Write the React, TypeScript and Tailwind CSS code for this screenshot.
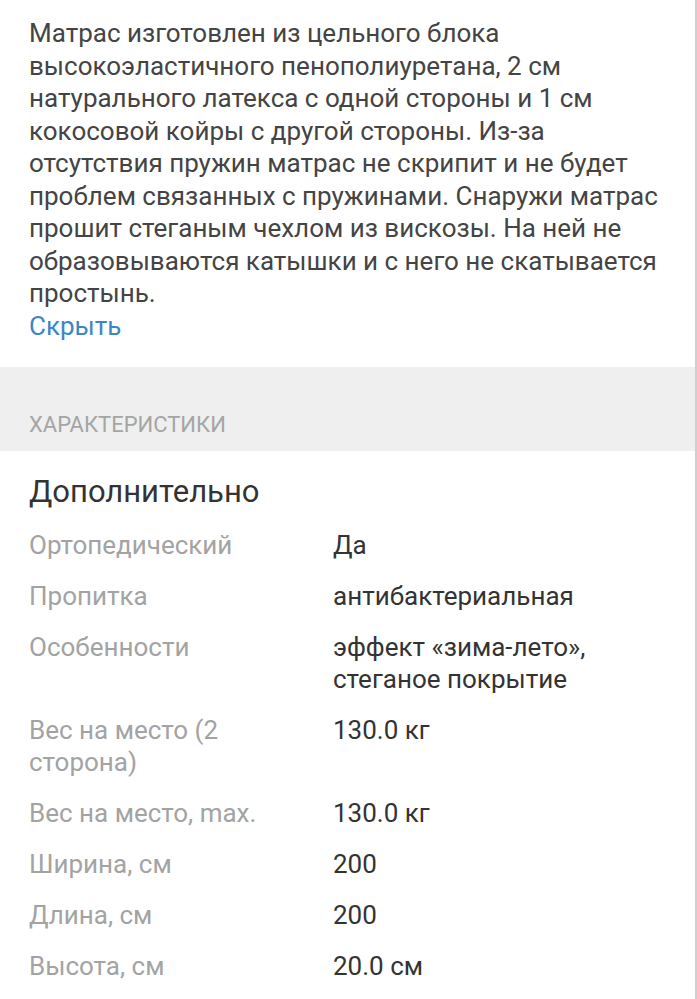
import React from "react";

const rows: { label: string; value: string[] }[] = [
  { label: "Ортопедический", value: ["Да"] },
  { label: "Пропитка", value: ["антибактериальная"] },
  { label: "Особенности", value: ["эффект «зима-лето»,", "стеганое покрытие"] },
  { label: "Вес на место (2 сторона)", value: ["130.0 кг"] },
  { label: "Вес на место, max.", value: ["130.0 кг"] },
  { label: "Ширина, см", value: ["200"] },
  { label: "Длина, см", value: ["200"] },
  { label: "Высота, см", value: ["20.0 см"] },
];

const SpecRow: React.FC<{ label: string; value: string[] }> = ({ label, value }) => (
  <div className="grid grid-cols-[304px_1fr] text-[26px] leading-[32px]">
    <div className="pr-[24px] text-[#a3a3a3]">{label}</div>
    <div className="text-[#333333]">
      {value.map((v) => (
        <div key={v}>{v}</div>
      ))}
    </div>
  </div>
);

export default function App() {
  return (
    <div className="min-h-screen w-full bg-white border-r-2 border-[#cfcfcf] font-['Roboto',sans-serif]">
      <section className="px-[29px] pt-[17px] pb-[25px]">
        <p className="text-[26px] leading-[32.5px] text-[#444444]">
          Матрас изготовлен из цельного блока высокоэластичного пенополиуретана, 2 см
          натурального латекса с одной стороны и 1 см кокосовой койры с другой стороны.
          Из-за отсутствия пружин матрас не скрипит и не будет проблем связанных с
          пружинами. Снаружи матрас прошит стеганым чехлом из вискозы. На ней не
          образовываются катышки и с него не скатывается простынь.
        </p>
        <button className="text-[26px] leading-[32.5px] text-[#3d86c6]">Скрыть</button>
      </section>

      <div className="h-[84px] bg-[#efefef] px-[29px] pt-[45px]">
        <h2 className="text-[22px] leading-[26px] text-[#a5a5a5] uppercase">Характеристики</h2>
      </div>

      <section className="px-[29px] pt-[23px] pb-[20px]">
        <h3 className="text-[31px] leading-[36px] text-[#333333]">Дополнительно</h3>
        <div className="mt-[19px] flex flex-col gap-[19px]">
          {rows.map((r) => (
            <SpecRow key={r.label} label={r.label} value={r.value} />
          ))}
        </div>
      </section>
    </div>
  );
}
